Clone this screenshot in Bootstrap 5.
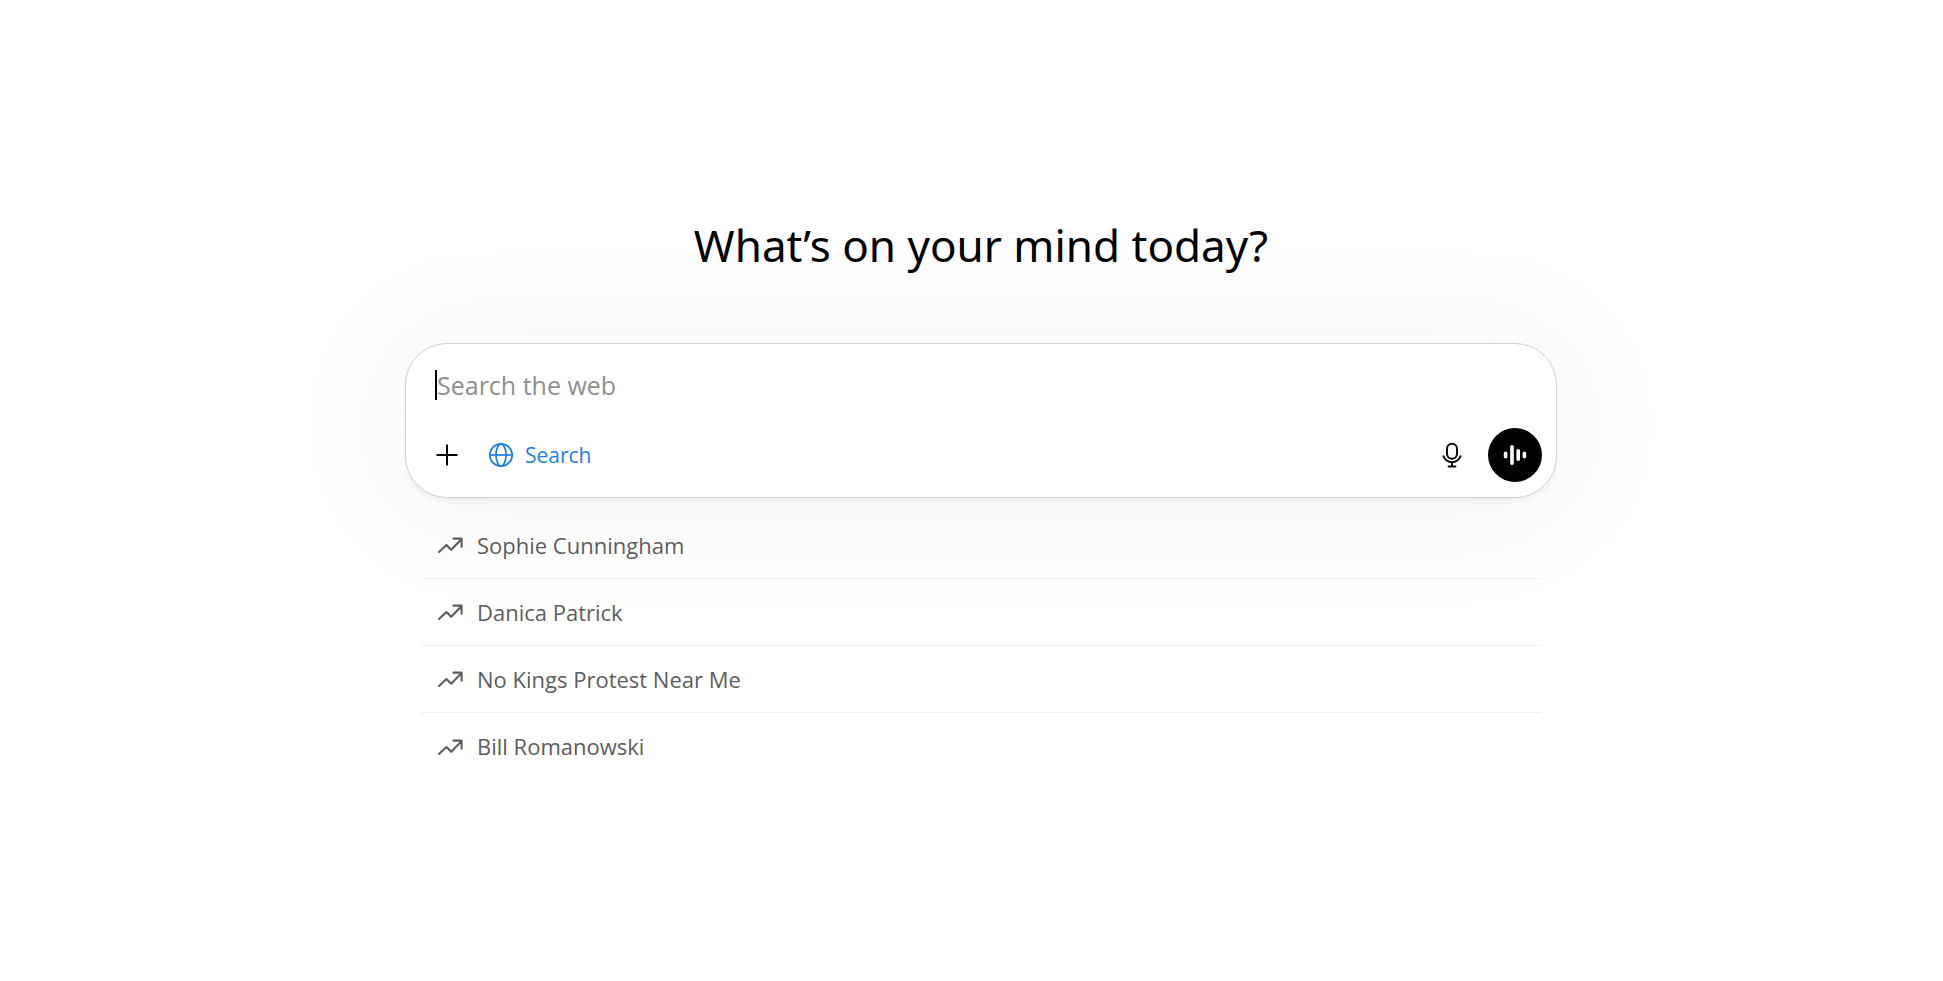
<!DOCTYPE html>
<html lang="en">
<head>
<meta charset="utf-8">
<meta name="viewport" content="width=device-width, initial-scale=1">
<title>What’s on your mind today?</title>
<link href="https://cdn.jsdelivr.net/npm/bootstrap@5.3.0/dist/css/bootstrap.min.css" rel="stylesheet">
<style>
  body { font-family: "Open Sans", "Noto Sans", sans-serif; background: #fff; color: #0d0d0d; }
  .page { padding: 205px 16px 32px 35px; }
  .column-chat { max-width: 1152px; }
  .headline { font-family: "Noto Sans", "Open Sans", sans-serif; font-size: 44px; line-height: 80px; font-weight: 400; color: #000; margin-bottom: 58px; }
  .composer {
    border: 1px solid #d2d2d2; border-radius: 42px; background: #fff; padding: 14px 14px 15px 29px;
    box-shadow: 0 5px 5px rgba(0,0,0,.04), 0 5px 130px 20px rgba(0,0,0,.04);
  }
  .prompt-row { height: 54px; margin-bottom: 16px; }
  .caret { width: 2px; height: 30px; background: #000; }
  .prompt { font-size: 25px; line-height: 32px; outline: 0; }
  .prompt::placeholder { color: #8f8f8f; opacity: 1; }
  .tools { min-height: 54px; }
  .tool-btn { color: #0d0d0d; line-height: 0; }
  .search-toggle { color: #1a80e8; font-size: 21px; line-height: 32px; gap: 11px; margin-left: 29px; }
  .voice { width: 54px; height: 54px; background: #000; margin-left: 24px; }
  .trends { margin: 14px 16px 0; }
  .trend { height: 67px; padding: 0 16px; gap: 14px; font-size: 22px; color: #5d5d5d; border-bottom: 1px solid #f0f0f0; }
  li:last-child .trend { border-bottom: 0; }
</style>
</head>
<body>
<main class="page">
  <div class="column-chat mx-auto">
    <h1 class="headline text-center">What’s on your mind today?</h1>
    <form class="composer">
      <div class="prompt-row d-flex align-items-center">
        <span class="caret flex-shrink-0"></span>
        <input class="prompt border-0 p-0 bg-transparent flex-grow-1" type="text" placeholder="Search the web" aria-label="Search the web">
      </div>
      <div class="tools d-flex align-items-center">
        <button type="button" class="tool-btn border-0 bg-transparent p-0" aria-label="Add">
          <svg width="24" height="24" viewBox="0 0 24 24" fill="none" stroke="#000" stroke-width="2"><path d="M12 1.500v21M1.500 12h21"/></svg>
        </button>
        <button type="button" class="search-toggle d-flex align-items-center border-0 bg-transparent p-0">
          <svg width="26" height="26" viewBox="0 0 26 26" fill="none" stroke="currentColor" stroke-width="1.7"><circle cx="13" cy="13" r="11.2"/><ellipse cx="13" cy="13" rx="5" ry="11.2"/><path d="M2 13h22"/></svg>
          <span>Search</span>
        </button>
        <button type="button" class="tool-btn border-0 bg-transparent p-0 ms-auto" aria-label="Dictate">
          <svg width="24" height="26" viewBox="0 0 24 26" fill="none" stroke="#0d0d0d" stroke-width="2" stroke-linecap="round"><rect x="7" y="1.800" width="10" height="15" rx="5"/><path d="M3.400 14.200c1.500 3.600 4.600 6 8.600 6s7.100-2.400 8.600-6M12 20.400v4M8.600 24.400h6.800"/></svg>
        </button>
        <button type="button" class="voice border-0 rounded-circle p-0 d-flex align-items-center justify-content-center" aria-label="Voice mode">
          <svg width="26" height="24" viewBox="0 0 26 24" fill="none" stroke="#fff" stroke-width="3.600" stroke-linecap="round"><path d="M3.600 10.200v3.600M10 3.800v16.400M16.200 7.800v8.400M22.400 10.200v3.600"/></svg>
        </button>
      </div>
    </form>
    <svg class="d-none">
      <symbol id="trend" viewBox="0 0 26 20"><path d="M2 17 9.500 10l4.700 4.700L24.400 4.200M16.400 3.600h8.200v8.200" fill="none" stroke="currentColor" stroke-width="2.100" stroke-linecap="round" stroke-linejoin="round"/></symbol>
    </svg>
    <ul class="trends list-unstyled">
      <li><a href="#" class="trend d-flex align-items-center text-decoration-none"><svg width="26" height="20"><use href="#trend"/></svg>Sophie Cunningham</a></li>
      <li><a href="#" class="trend d-flex align-items-center text-decoration-none"><svg width="26" height="20"><use href="#trend"/></svg>Danica Patrick</a></li>
      <li><a href="#" class="trend d-flex align-items-center text-decoration-none"><svg width="26" height="20"><use href="#trend"/></svg>No Kings Protest Near Me</a></li>
      <li><a href="#" class="trend d-flex align-items-center text-decoration-none"><svg width="26" height="20"><use href="#trend"/></svg>Bill Romanowski</a></li>
    </ul>
  </div>
</main>
<script src="https://cdn.jsdelivr.net/npm/bootstrap@5.3.0/dist/js/bootstrap.bundle.min.js"></script>
</body>
</html>
